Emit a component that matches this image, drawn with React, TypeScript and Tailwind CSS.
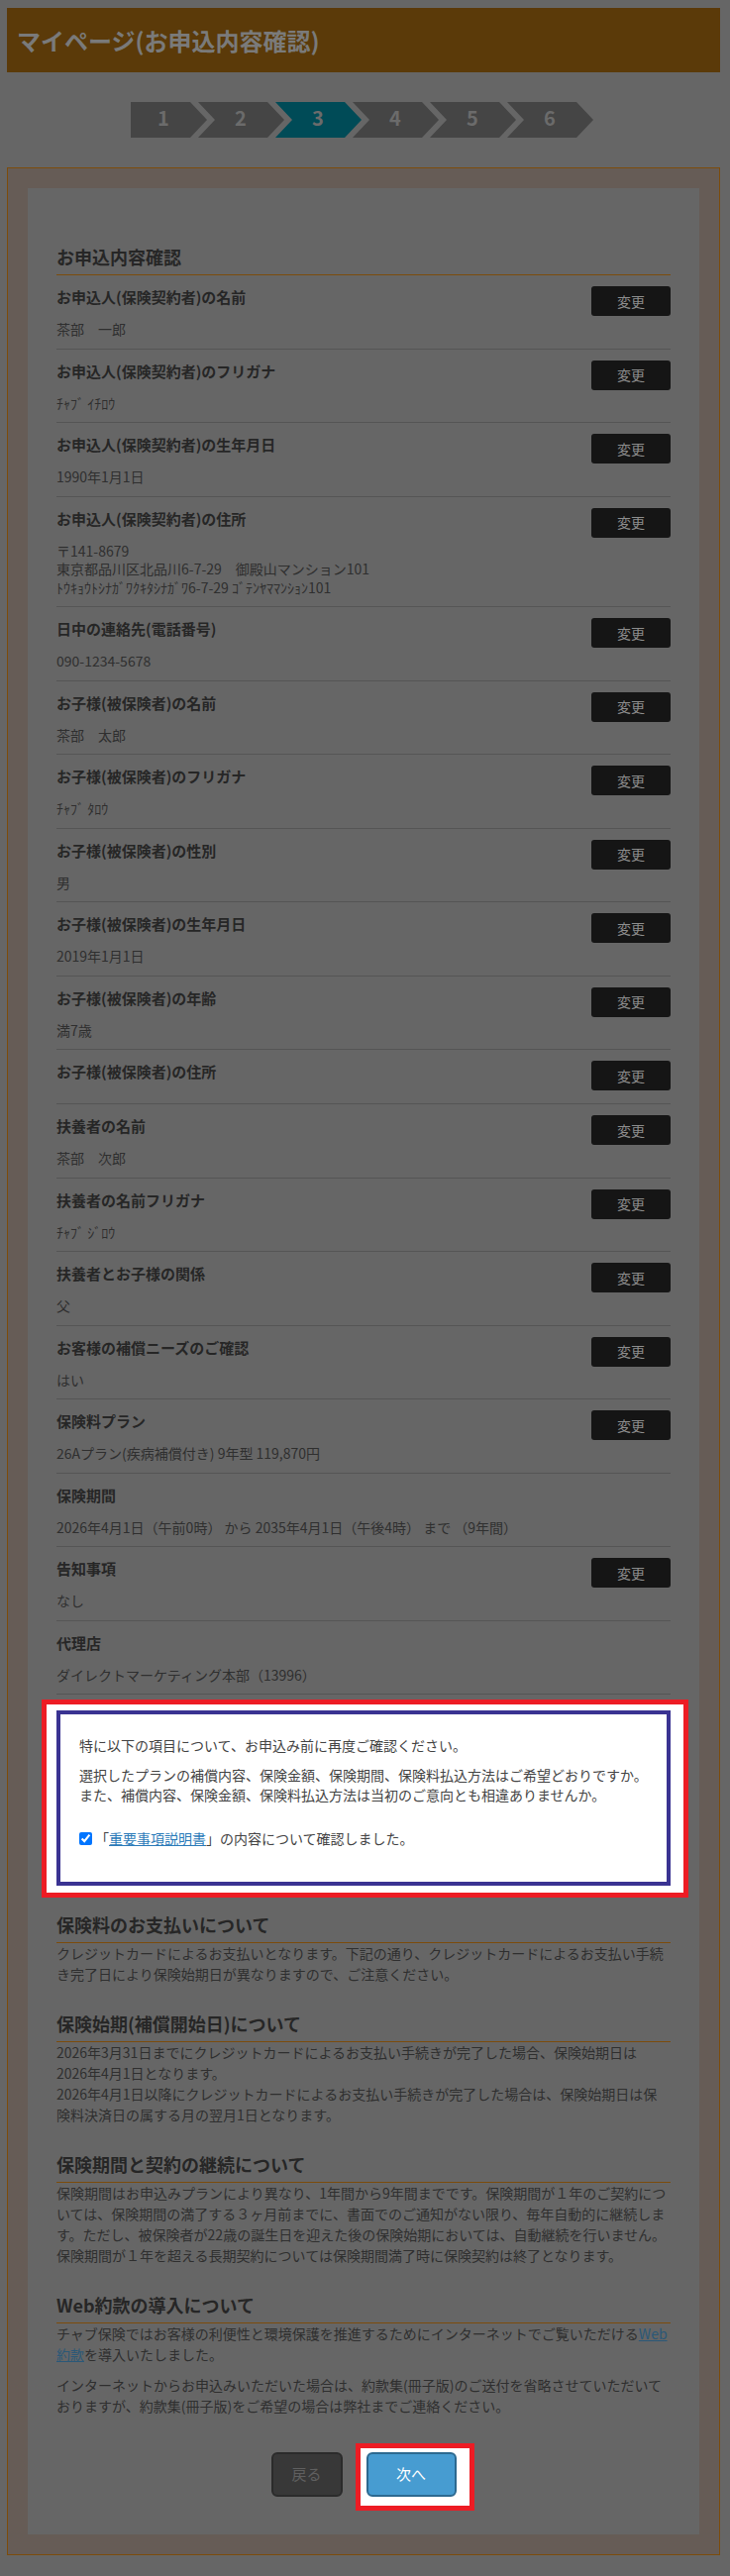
import React from "react";

type Row = { label: string; values: string[]; btn: boolean };

const rows: Row[] = [
  { label: "お申込人(保険契約者)の名前", values: ["茶部　一郎"], btn: true },
  { label: "お申込人(保険契約者)のフリガナ", values: ["ﾁｬﾌﾞ ｲﾁﾛｳ"], btn: true },
  { label: "お申込人(保険契約者)の生年月日", values: ["1990年1月1日"], btn: true },
  {
    label: "お申込人(保険契約者)の住所",
    values: [
      "〒141-8679",
      "東京都品川区北品川6-7-29　御殿山マンション101",
      "ﾄｳｷｮｳﾄｼﾅｶﾞﾜｸｷﾀｼﾅｶﾞﾜ6-7-29 ｺﾞﾃﾝﾔﾏﾏﾝｼｮﾝ101",
    ],
    btn: true,
  },
  { label: "日中の連絡先(電話番号)", values: ["090-1234-5678"], btn: true },
  { label: "お子様(被保険者)の名前", values: ["茶部　太郎"], btn: true },
  { label: "お子様(被保険者)のフリガナ", values: ["ﾁｬﾌﾞ ﾀﾛｳ"], btn: true },
  { label: "お子様(被保険者)の性別", values: ["男"], btn: true },
  { label: "お子様(被保険者)の生年月日", values: ["2019年1月1日"], btn: true },
  { label: "お子様(被保険者)の年齢", values: ["満7歳"], btn: true },
  { label: "お子様(被保険者)の住所", values: [], btn: true },
  { label: "扶養者の名前", values: ["茶部　次郎"], btn: true },
  { label: "扶養者の名前フリガナ", values: ["ﾁｬﾌﾞ ｼﾞﾛｳ"], btn: true },
  { label: "扶養者とお子様の関係", values: ["父"], btn: true },
  { label: "お客様の補償ニーズのご確認", values: ["はい"], btn: true },
  { label: "保険料プラン", values: ["26Aプラン(疾病補償付き) 9年型 119,870円"], btn: true },
  {
    label: "保険期間",
    values: ["2026年4月1日（午前0時） から 2035年4月1日（午後4時） まで （9年間）"],
    btn: false,
  },
  { label: "告知事項", values: ["なし"], btn: true },
  { label: "代理店", values: ["ダイレクトマーケティング本部（13996）"], btn: false },
];

function Steps() {
  const polys: string[] = [];
  for (let i = 0; i < 6; i++) {
    const R = 60 + 78 * i;
    if (i === 0) {
      polys.push(`0,0 ${R},0 ${R + 17},18 ${R},36 0,36`);
    } else {
      const L = R - 70;
      polys.push(`${L},0 ${R},0 ${R + 17},18 ${R},36 ${L},36 ${L + 17},18`);
    }
  }
  return (
    <svg width="467" height="36" viewBox="0 0 467 36">
      {polys.map((p, i) => (
        <polygon key={i} points={p} fill={i === 2 ? "#004b57" : "#454545"} />
      ))}
      {polys.map((_, i) => (
        <text
          key={"t" + i}
          x={33 + 78 * i}
          y={19}
          textAnchor="middle"
          dominantBaseline="middle"
          fontSize="20"
          fontWeight="bold"
          fill="#6b6b6b"
          fontFamily="'Noto Sans CJK JP', sans-serif"
        >
          {i + 1}
        </text>
      ))}
    </svg>
  );
}

function InfoRow({ row }: { row: Row }) {
  return (
    <div className="flex items-start justify-between border-b border-[#555555] pt-[11px] pb-[10px]">
      <div>
        <div className="text-[15px] font-bold leading-[22px] text-[#262626]">{row.label}</div>
        <div className={row.values.length ? "mt-[12px] text-[14px] leading-[18.5px] text-[#2f2f2f]" : "mt-[11px]"}>
          {row.values.map((v, i) => (
            <div key={i}>{v}</div>
          ))}
        </div>
      </div>
      {row.btn && (
        <button className="flex h-[30px] w-[80px] shrink-0 items-center justify-center rounded-[3px] bg-[#151515] text-[14px] text-[#8c8c8c]">
          変更
        </button>
      )}
    </div>
  );
}

function SectionHead({ children }: { children: React.ReactNode }) {
  return (
    <h2 className="border-b border-[#7c4c0c] pb-[4px] text-[18px] font-bold leading-[27px] text-[#262626]">
      {children}
    </h2>
  );
}

export default function App() {
  return (
    <div className="min-h-[2601px] w-full bg-[#666666] pt-[8px] pb-[14px] font-['Noto_Sans_CJK_JP',sans-serif]">
      <div className="ml-[7px] w-[720px]">
        <div className="flex h-[65px] items-center bg-[#5b3a09] pl-[10px]">
          <h1 className="text-[24px] font-bold leading-none text-[#7a7a7a]">マイページ(お申込内容確認)</h1>
        </div>

        <div className="flex justify-center pt-[30px] pb-[30px] pr-[4px]">
          <Steps />
        </div>

        <div className="border border-[#7c4c0c] bg-[#665c56] p-[20px]">
          <div className="bg-[#666666] px-[29px] pt-[56px] pb-[38px]">
            <SectionHead>お申込内容確認</SectionHead>
            {rows.map((r, i) => (
              <InfoRow key={i} row={r} />
            ))}

            <div className="mt-[5px] -ml-[15px] -mr-[18px] border-[5px] border-[#ed1c24] bg-white pt-[6px] pb-[7px] pl-[10px] pr-[13px]">
              <div className="border-[4px] border-[#3a3392] pt-[21px] pb-[34px] pl-[19px] pr-[10px] text-[14px] leading-[20px] text-[#444444]">
                <p>特に以下の項目について、お申込み前に再度ご確認ください。</p>
                <p className="mt-[10px]">
                  選択したプランの補償内容、保険金額、保険期間、保険料払込方法はご希望どおりですか。
                  <br />
                  また、補償内容、保険金額、保険料払込方法は当初のご意向とも相違ありませんか。
                </p>
                <div className="mt-[24px] flex items-center">
                  <input
                    type="checkbox"
                    checked
                    readOnly
                    className="m-0 mr-[3px] h-[13px] w-[13px] accent-[#0075ff]"
                  />
                  <span>
                    「<span className="text-[#2b7bb9] underline">重要事項説明書</span>」の内容について確認しました。
                  </span>
                </div>
              </div>
            </div>

            <div className="mt-[14px] text-[14px] leading-[21px] text-[#2f2f2f]">
              <SectionHead>保険料のお支払いについて</SectionHead>
              <p>
                クレジットカードによるお支払いとなります。下記の通り、クレジットカードによるお支払い手続
                <br />
                き完了日により保険始期日が異なりますので、ご注意ください。
              </p>

              <div className="mt-[26px]">
                <SectionHead>保険始期(補償開始日)について</SectionHead>
                <p>
                  2026年3月31日までにクレジットカードによるお支払い手続きが完了した場合、保険始期日は
                  <br />
                  2026年4月1日となります。
                  <br />
                  2026年4月1日以降にクレジットカードによるお支払い手続きが完了した場合は、保険始期日は保
                  <br />
                  険料決済日の属する月の翌月1日となります。
                </p>
              </div>

              <div className="mt-[26px]">
                <SectionHead>保険期間と契約の継続について</SectionHead>
                <p>
                  保険期間はお申込みプランにより異なり、1年間から9年間までです。保険期間が１年のご契約につ
                  <br />
                  いては、保険期間の満了する３ヶ月前までに、書面でのご通知がない限り、毎年自動的に継続しま
                  <br />
                  す。ただし、被保険者が22歳の誕生日を迎えた後の保険始期においては、自動継続を行いません。
                  <br />
                  保険期間が１年を超える長期契約については保険期間満了時に保険契約は終了となります。
                </p>
              </div>

              <div className="mt-[26px]">
                <SectionHead>Web約款の導入について</SectionHead>
                <p>
                  チャブ保険ではお客様の利便性と環境保護を推進するためにインターネットでご覧いただける
                  <span className="text-[#2a5878] underline">Web</span>
                  <br />
                  <span className="text-[#2a5878] underline">約款</span>を導入いたしました。
                </p>
                <p className="mt-[10px]">
                  インターネットからお申込みいただいた場合は、約款集(冊子版)のご送付を省略させていただいて
                  <br />
                  おりますが、約款集(冊子版)をご希望の場合は弊社までご連絡ください。
                </p>
              </div>
            </div>

            <div className="mt-[36px] flex justify-center gap-[24px]">
              <button className="flex h-[45px] w-[72px] items-center justify-center rounded-[6px] border-2 border-[#2b2b2b] bg-[#383838] text-[15px] text-[#5f5f5f]">
                戻る
              </button>
              <div className="relative">
                <div className="absolute -top-[9px] -bottom-[14px] -left-[11px] -right-[18px] border-[5px] border-[#ed1c24] bg-white" />
                <button className="relative flex h-[45px] w-[91px] items-center justify-center rounded-[6px] border-2 border-[#2c6990] bg-[#479cd1] text-[15px] text-white">
                  次へ
                </button>
              </div>
            </div>
          </div>
        </div>
      </div>
    </div>
  );
}
